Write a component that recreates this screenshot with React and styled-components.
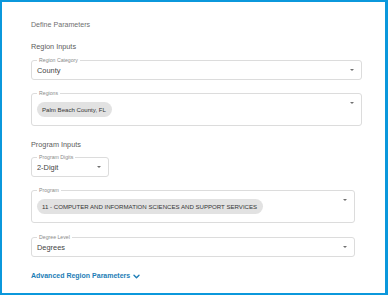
import React from 'react'
import styled, { createGlobalStyle } from 'styled-components'

const GlobalStyle = createGlobalStyle`
  html, body {
    margin: 0;
    padding: 0;
    background: #fff;
  }
  * {
    box-sizing: border-box;
  }
`

const Frame = styled.div`
  width: 388px;
  height: 295px;
  border: 2px solid #0b98dc;
  border-right-width: 3px;
  padding: 18px 23px 0 29px;
  font-family: "Liberation Sans", Arial, sans-serif;
  background: #fff;
  overflow: hidden;
`

const Title = styled.div`
  font-size: 7.1px;
  line-height: 10px;
  color: #707070;
`

const Section = styled.div`
  display: flex;
  flex-direction: column;
  padding-right: ${(p) => p.$inset || 0}px;
`

const SectionTitle = styled.div`
  margin-top: ${(p) => p.$top}px;
  font-size: 7.3px;
  line-height: 10px;
  color: #5c5c5c;
`

const Box = styled.div`
  position: relative;
  display: flex;
  margin-top: ${(p) => p.$top}px;
  width: ${(p) => (p.$width ? `${p.$width}px` : 'auto')};
  height: ${(p) => p.$height}px;
  border: 1px solid #dcdcdc;
  border-radius: 3px;
  padding-left: 5px;
`

const Label = styled.span`
  position: absolute;
  top: -4px;
  left: 5px;
  padding: 0 2px;
  background: #fff;
  font-size: 5.2px;
  line-height: 7px;
  color: #8a8a8a;
  white-space: nowrap;
`

const Value = styled.div`
  flex: 1;
  display: flex;
  align-items: center;
  font-size: 7.4px;
  color: #444;
  min-width: 0;
`

const Chip = styled.span`
  display: inline-flex;
  align-items: center;
  height: 15px;
  padding: 0 6px 0 5px;
  border-radius: 8px;
  background: #e2e2e2;
  font-size: 6.1px;
  color: #363636;
  white-space: nowrap;
`

const Caret = styled.span`
  align-self: flex-start;
  margin: 8px 7px 0 4px;
  width: 0;
  height: 0;
  border-left: 2.5px solid transparent;
  border-right: 2.5px solid transparent;
  border-top: 2.5px solid #707070;
`

const Advanced = styled.a`
  display: inline-flex;
  align-items: center;
  gap: 3px;
  margin-top: 14px;
  font-size: 7px;
  line-height: 10px;
  font-weight: 700;
  color: #1c7db6;
  text-decoration: none;
  cursor: pointer;
`

function Field({ label, value, chip, top, height = 20, width }) {
  return (
    <Box $top={top} $height={height} $width={width}>
      <Label>{label}</Label>
      <Value>{chip ? <Chip>{chip}</Chip> : value}</Value>
      <Caret />
    </Box>
  )
}

export default function App() {
  return (
    <>
      <GlobalStyle />
      <Frame>
        <Title>Define Parameters</Title>

        <Section>
          <SectionTitle $top={12}>Region Inputs</SectionTitle>
          <Field top={8} label="Region Category" value="County" />
          <Field top={13} height={33} label="Regions" chip="Palm Beach County, FL" />
        </Section>

        <Section $inset={7}>
          <SectionTitle $top={14}>Program Inputs</SectionTitle>
          <Field top={7} width={78} label="Program Digits" value="2-Digit" />
          <Field
            top={13}
            height={33}
            label="Program"
            chip="11 - COMPUTER AND INFORMATION SCIENCES AND SUPPORT SERVICES"
          />
          <Field top={14} label="Degree Level" value="Degrees" />
        </Section>

        <Advanced>
          Advanced Region Parameters
          <svg width="7" height="5" viewBox="0 0 7 5" fill="none">
            <path d="M1 1.2 L3.5 3.7 L6 1.2" stroke="#1c7db6" strokeWidth="1.4" strokeLinecap="round" strokeLinejoin="round" />
          </svg>
        </Advanced>
      </Frame>
    </>
  )
}
